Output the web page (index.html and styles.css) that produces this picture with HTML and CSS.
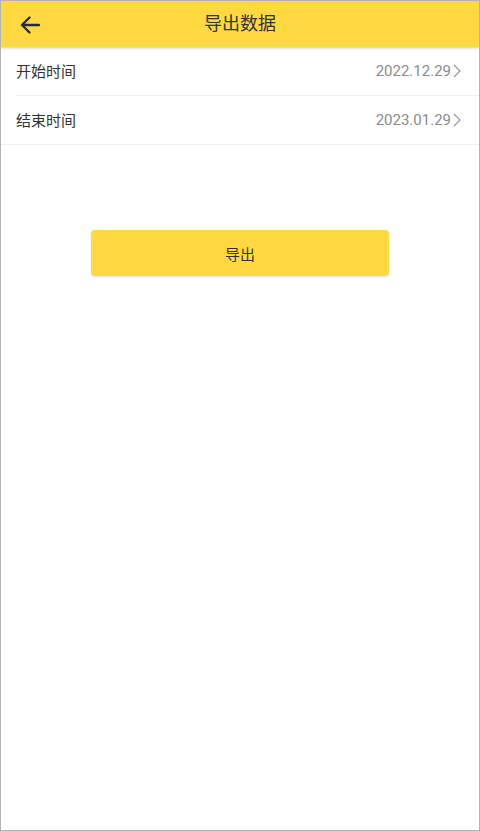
FILE: index.html
```html
<!DOCTYPE html>
<html lang="zh">
<head>
<meta charset="utf-8">
<link rel="stylesheet" href="styles.css">
</head>
<body>
<div class="frame">
  <header class="topbar">
    <span class="back">
      <svg width="20" height="18" viewBox="0 0 20 18"><path d="M19 9H2.5M9.5 1.5L2 9l7.5 7.5" fill="none" stroke="#2b2b2b" stroke-width="2.4" stroke-linecap="round" stroke-linejoin="round"/></svg>
    </span>
    <h1 class="title">导出数据</h1>
  </header>
  <div class="list">
    <div class="row row-inset">
      <span class="label">开始时间</span>
      <span class="value">2022.12.29<svg class="chev" width="8" height="14" viewBox="0 0 8 14"><path d="M1 1l6 6-6 6" fill="none" stroke="#9a9a9a" stroke-width="1.2"/></svg></span>
    </div>
    <div class="row row-full">
      <span class="label">结束时间</span>
      <span class="value">2023.01.29<svg class="chev" width="8" height="14" viewBox="0 0 8 14"><path d="M1 1l6 6-6 6" fill="none" stroke="#9a9a9a" stroke-width="1.2"/></svg></span>
    </div>
  </div>
  <div class="actions">
    <button class="export">导出</button>
  </div>
</div>
</body>
</html>
```
FILE: styles.css
```css
html, body {
  margin: 0;
  padding: 0;
  background: #fff;
}
body {
  font-family: Roboto, "Noto Sans CJK SC", "Noto Sans", sans-serif;
  color: #333;
}
.frame {
  box-sizing: border-box;
  width: 480px;
  height: 831px;
  border: 1px solid #b3b3b3;
  background: #fff;
  overflow: hidden;
}
.topbar {
  position: relative;
  height: 46px;
  background: #fed940;
  display: flex;
  align-items: center;
  justify-content: center;
  box-shadow: 0 1px 3px rgba(0,0,0,0.22);
  z-index: 1;
}
.back {
  position: absolute;
  left: 19px;
  top: 15px;
  display: flex;
}
.title {
  margin: 0;
  font-size: 18px;
  font-weight: 400;
  color: #333;
  line-height: 1;
}
.list {
  display: flex;
  flex-direction: column;
}
.row {
  height: 48px;
  display: flex;
  align-items: center;
  justify-content: space-between;
  padding: 0 18px 1px 15px;
  box-sizing: border-box;
  height: 49px;
  font-size: 15px;
}
.row-inset {
  border-bottom: 1px solid #f0f0f0;
  margin-left: 15px;
  padding-left: 0;
}
.row-full {
  border-bottom: 1px solid #f0f0f0;
}
.label {
  color: #333;
}
.value {
  display: flex;
  align-items: center;
  gap: 2px;
  color: #8c8c8c;
}
.chev {
  display: block;
}
.actions {
  padding: 85px 0 0 90px;
}
.export {
  width: 298px;
  height: 46px;
  border: none;
  border-radius: 4px;
  background: #fed940;
  box-shadow: 0 1px 2px rgba(0,0,0,0.12);
  font-family: Roboto, "Noto Sans CJK SC", sans-serif;
  font-size: 15px;
  color: #333;
  padding: 0;
}
```
